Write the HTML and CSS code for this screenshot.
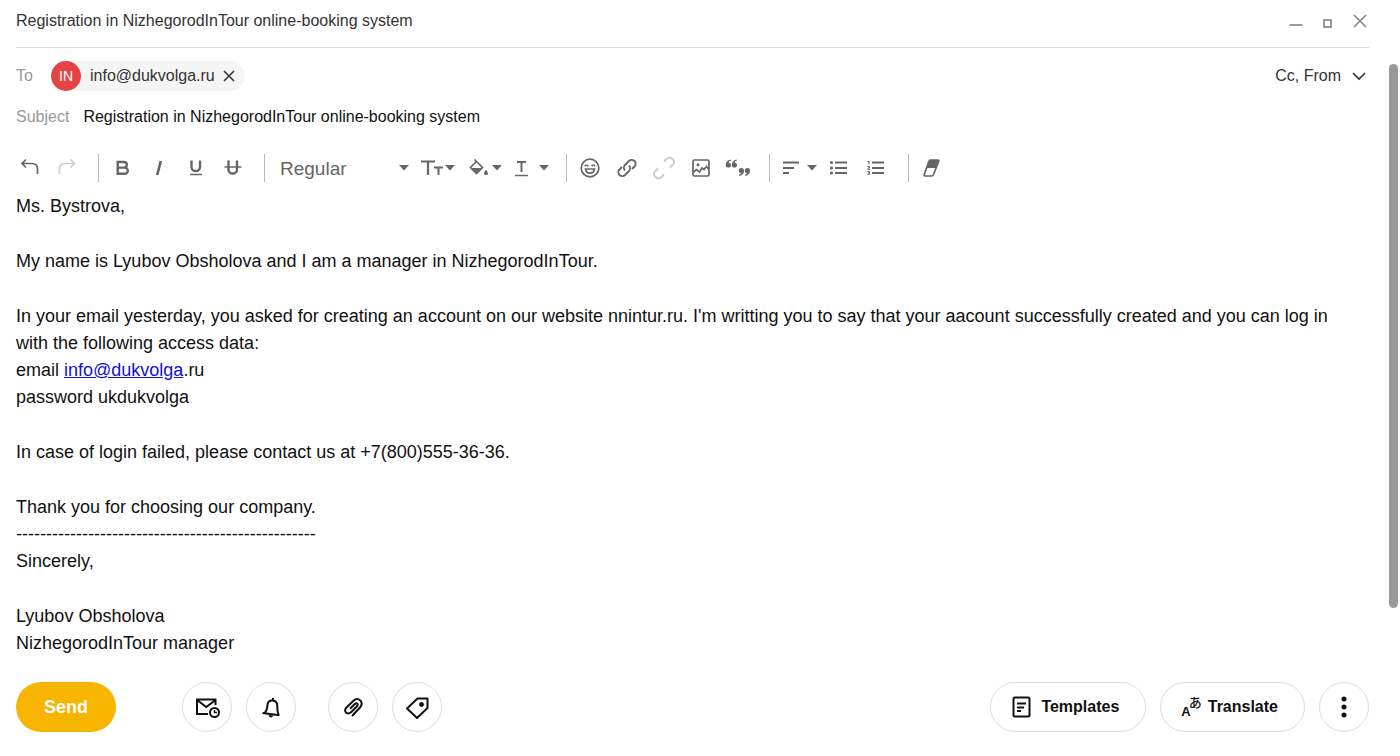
FILE: index.html
```html
<!DOCTYPE html>
<html lang="en">
<head>
    <meta charset="UTF-8">
    <meta name="viewport" content="width=device-width, initial-scale=1.0">
    <link rel="stylesheet" href="styles.css">
    <title>New message</title>
</head>
<body>
    <div class="window">
        <main class="compose">
            <header class="title-bar">
                <h1 class="title">Registration in NizhegorodInTour online-booking system</h1>
                <div class="window-controls">
                    <button class="window-btn" aria-label="Minimize">
                        <svg width="16" height="16" viewBox="0 0 16 16"><path d="M1.5 12h13" /></svg>
                    </button>
                    <button class="window-btn" aria-label="Maximize">
                        <svg width="16" height="16" viewBox="0 0 16 16"><rect x="4" y="7" width="7" height="7" /></svg>
                    </button>
                    <button class="window-btn" aria-label="Close">
                        <svg width="16" height="16" viewBox="0 0 16 16"><path d="M2 2l12 12M14 2L2 14" /></svg>
                    </button>
                </div>
            </header>

            <div class="field to-field">
                <span class="label to-label">To</span>
                <div class="chip">
                    <span class="avatar">IN</span>
                    <span class="chip-text">info@dukvolga.ru</span>
                    <button class="chip-remove" aria-label="Remove recipient">
                        <svg width="12" height="12" viewBox="0 0 12 12"><path d="M1 1l10 10M11 1L1 11" /></svg>
                    </button>
                </div>
                <button class="cc-btn">
                    Cc, From
                    <svg width="14" height="10" viewBox="0 0 14 10"><path d="M1 2l6 6 6-6" /></svg>
                </button>
            </div>

            <div class="field subject-field">
                <label class="label" for="subject">Subject</label>
                <input class="subject-input" id="subject" type="text" value="Registration in NizhegorodInTour online-booking system">
            </div>

            <div class="toolbar">
                <button class="tool" aria-label="Undo">
                    <svg width="24" height="24" viewBox="0 0 24 24"><path d="M8 3.5l-4 4 4 4M4 7.500h10q5.500 0 5.500 5.500v5" /></svg>
                </button>
                <button class="tool" aria-label="Redo" disabled>
                    <svg width="24" height="24" viewBox="0 0 24 24"><path d="M15.500 3.500l4 4-4 4M19.500 7.500H10q-5.500 0-5.500 5.500v5" /></svg>
                </button>
                <span class="separator"></span>
                <button class="tool" aria-label="Bold">
                    <svg width="24" height="24" viewBox="0 0 24 24"><path stroke-width="2.4" d="M7.700 6h6.300a2.800 2.800 0 0 1 0 5.600H7.700zM7.700 11.600h7a3.100 3.100 0 0 1 0 6.200h-7z" /></svg>
                </button>
                <button class="tool" aria-label="Italic">
                    <svg width="24" height="24" viewBox="0 0 24 24"><path stroke-width="2.6" d="M13.800 5l-3.600 14" /></svg>
                </button>
                <button class="tool" aria-label="Underline">
                    <svg width="24" height="24" viewBox="0 0 24 24"><path stroke-width="2.4" d="M7.500 4.500v6.500a4 3.800 0 0 0 8.500 0V4.500" /><path stroke-width="1.5" d="M6 18.500h12" /></svg>
                </button>
                <button class="tool" aria-label="Strikethrough">
                    <svg width="24" height="24" viewBox="0 0 24 24"><path stroke-width="2.4" d="M7.500 4.500v9a4 3.800 0 0 0 8.500 0v-9" /><path stroke-width="1.5" d="M3.500 11h17" /></svg>
                </button>
                <span class="separator"></span>
                <div class="font-box">
                    <select class="font-select" aria-label="Font">
                        <option>Regular</option>
                    </select>
                    <svg class="caret" width="10" height="6" viewBox="0 0 10 6"><path d="M0 0h10L5 5.500z" /></svg>
                </div>
                <button class="tool tool-menu" aria-label="Font size">
                    <svg width="24" height="24" viewBox="0 0 24 24"><path stroke-width="2.2" d="M0 5.500h14M7 5.500V19" /><path stroke-width="2" d="M13 11.500h9M17.500 11.500V19" /></svg>
                    <svg class="caret" width="10" height="6" viewBox="0 0 10 6"><path d="M0 0h10L5 5.500z" /></svg>
                </button>
                <button class="tool tool-menu" aria-label="Background color">
                    <svg width="24" height="24" viewBox="0 0 24 24"><path d="M6.500 3.500l8 8-6 6-6-6 6-6" /><path class="solid" d="M3 12h11l-5.500 5.500zM18 13.500q4 5.500 0 5.500t0-5.500z" /></svg>
                    <svg class="caret" width="10" height="6" viewBox="0 0 10 6"><path d="M0 0h10L5 5.500z" /></svg>
                </button>
                <button class="tool tool-menu" aria-label="Text color">
                    <svg width="24" height="24" viewBox="0 0 24 24"><path stroke-width="2" d="M2 6h9M6.500 6v10" /><path stroke-width="1.5" d="M0 19.500h13" /></svg>
                    <svg class="caret" width="10" height="6" viewBox="0 0 10 6"><path d="M0 0h10L5 5.500z" /></svg>
                </button>
                <span class="separator"></span>
                <button class="tool" aria-label="Emoji">
                    <svg width="24" height="24" viewBox="0 0 24 24"><circle cx="12" cy="12" r="8.800" /><path d="M6.800 10.300q1.600-2.600 3.500 0M13.700 10.300q1.600-2.600 3.500 0M7.500 13h9q-.8 4.200-4.500 4.200T7.500 13z" /></svg>
                </button>
                <button class="tool" aria-label="Insert link">
                    <svg width="24" height="24" viewBox="0 0 24 24"><path stroke-width="1.9" d="M10 14.500a4 4 0 0 1 0-5.500l4-4a3.700 3.700 0 0 1 5.500 5.500L17 13M14 9.500a4 4 0 0 1 0 5.500l-4 4a3.700 3.700 0 0 1-5.500-5.500L7 11" /></svg>
                </button>
                <button class="tool" aria-label="Remove link" disabled>
                    <svg width="24" height="24" viewBox="0 0 24 24"><path stroke-width="1.9" d="M12 5.500l2.500-2.500q3-3 6 0t0 6L18 11.500M6 12.500L3.500 15q-3 3 0 6t6 0l2.500-2.500" /></svg>
                </button>
                <button class="tool" aria-label="Insert image">
                    <svg width="24" height="24" viewBox="0 0 24 24"><rect x="4" y="4" width="16" height="16" rx="1.500" /><path d="M4.500 16l3-2.500 3 2.500 2.500-4 2 1.500 2.500-3 2.500 3" /><circle class="solid" cx="9" cy="8.700" r="1.500" /></svg>
                </button>
                <button class="tool" aria-label="Quote">
                    <svg width="26" height="24" viewBox="0 0 26 24"><path class="solid" d="M5.500 3.500Q.8 4.500.8 9a2.600 2.600 0 1 0 2.600-2.600Q4 5.200 5.800 4.800zM11.500 3.500Q6.800 4.500 6.800 9a2.600 2.600 0 1 0 2.600-2.600Q10 5.200 11.800 4.800zM14.300 20q4.700-1 4.700-5.500a2.600 2.600 0 1 0-2.600 2.600q-.6 1.200-2.400 1.600zM20.300 20q4.700-1 4.700-5.500a2.600 2.600 0 1 0-2.600 2.600q-.6 1.200-2.400 1.600z" /></svg>
                </button>
                <span class="separator"></span>
                <button class="tool tool-menu" aria-label="Align">
                    <svg width="24" height="24" viewBox="0 0 24 24"><path stroke-width="1.9" d="M0 6.500h16M0 12h11M0 17h6" /></svg>
                    <svg class="caret" width="10" height="6" viewBox="0 0 10 6"><path d="M0 0h10L5 5.500z" /></svg>
                </button>
                <button class="tool" aria-label="Bulleted list">
                    <svg width="24" height="24" viewBox="0 0 24 24"><path stroke-width="1.9" d="M7 6.500h12M7 12h12M7 17h12" /><circle class="solid" cx="3.500" cy="6.500" r="1.600" /><circle class="solid" cx="3.500" cy="12" r="1.600" /><circle class="solid" cx="3.500" cy="17" r="1.600" /></svg>
                </button>
                <button class="tool" aria-label="Numbered list">
                    <svg width="24" height="24" viewBox="0 0 24 24"><path stroke-width="1.9" d="M7 6.500h12M7 12h12M7 17h12" /><path stroke-width="1" d="M2.500 5.500H4v3M2.500 10.500h2v1.500H3v1.500h2M2.500 15.500h2v3h-2M3 17h1.500" /></svg>
                </button>
                <span class="separator"></span>
                <button class="tool" aria-label="Clear formatting">
                    <svg width="24" height="24" viewBox="0 0 24 24"><path stroke-linejoin="round" d="M10 4h8q1.200 0 .8 1.200L13.500 18.500q-.5 1.500-2 1.500H5q-1.300 0-.8-1.300L9 5q.3-1 1-1z" /><path class="solid" d="M9.500 4h9.300l-2.800 8H6.500z" /></svg>
                </button>
            </div>

            <div class="message" contenteditable="true" spellcheck="false">
                <p>Ms. Bystrova,</p>
                <p>My name is Lyubov Obsholova and I am a manager in NizhegorodInTour.</p>
                <p>In your email yesterday, you asked for creating an account on our website nnintur.ru. I'm writting you to say that your aacount successfully created and you can log in with the following access data:<br>
                email <a href="mailto:info@dukvolga.ru">info@dukvolga</a>.ru<br>
                password ukdukvolga</p>
                <p>In case of login failed, please contact us at +7(800)555-36-36.</p>
                <p>Thank you for choosing our company.<br>
                --------------------------------------------------<br>
                Sincerely,</p>
                <p>Lyubov Obsholova<br>
                NizhegorodInTour manager</p>
            </div>

            <footer class="actions">
                <button class="send-btn">Send</button>
                <div class="action-group">
                    <button class="round-btn" aria-label="Send later">
                        <svg width="26" height="24" viewBox="0 0 26 24"><path d="M14 19H3V4.500h18.500V10M3 5l9.300 7L21.500 5" /><circle cx="20.500" cy="17.500" r="4.500" /><path stroke-width="1.5" d="M20.500 15v2.500H23" /></svg>
                    </button>
                    <button class="round-btn" aria-label="Remind me">
                        <svg width="24" height="24" viewBox="0 0 24 24"><path d="M3.500 18l17 2.200M5.500 18q2.800-2.500 3-8.500.8-4.500 5.200-4t4.600 5.200q-.2 5.500 1.200 9M13.800 5.500l.3-2.700" /><path class="solid" d="M9.500 20l5 .6q-.8 2-2.700 1.800T9.500 20z" /></svg>
                    </button>
                </div>
                <div class="action-group">
                    <button class="round-btn" aria-label="Attach file">
                        <svg width="24" height="24" viewBox="0 0 24 24"><path d="M11 21l8-8.500q3.300-4 .3-7-3.300-3-6.800.3L5.500 12.500q-2.500 3-.5 5t5-.3l6-6q1.300-1.500.3-2.500t-2.500.3L9 13.800" /></svg>
                    </button>
                    <button class="round-btn" aria-label="Add label">
                        <svg width="24" height="24" viewBox="0 0 24 24"><path stroke-linejoin="round" d="M12.500 3.500H22.500V13L12 23l-10-9.500z" /><circle class="solid" cx="16.500" cy="9.500" r="2.400" /></svg>
                    </button>
                </div>
                <div class="action-group action-group-end">
                    <button class="pill-btn">
                        <svg width="22" height="24" viewBox="0 0 22 24"><rect x="2.500" y="2.500" width="16" height="19" rx="1.500" /><path d="M6 8.500h9M6 12.500h7M6 16h4" stroke-width="1.800" /></svg>
                        Templates
                    </button>
                    <button class="pill-btn pill-btn-tight">
                        <span class="translate-icon" aria-hidden="true"><span class="latin">A</span><span class="kana">あ</span></span>
                        Translate
                    </button>
                    <button class="round-btn" aria-label="More">
                        <svg width="24" height="24" viewBox="0 0 24 24"><circle class="solid" cx="12" cy="4" r="2.500" /><circle class="solid" cx="12" cy="12" r="2.500" /><circle class="solid" cx="12" cy="20" r="2.500" /></svg>
                    </button>
                </div>
            </footer>
        </main>
        <div class="scroll-track">
            <div class="scroll-thumb"></div>
        </div>
    </div>
</body>
</html>
```
FILE: styles.css
```css
* {
    box-sizing: border-box;
}

body {
    margin: 0;
    background-color: #fff;
    color: #111;
    font-family: "Liberation Sans", Arial, sans-serif;
    font-size: 16px;
}

button {
    padding: 0;
    border: none;
    background: none;
    color: inherit;
    font: inherit;
    cursor: pointer;
}

svg {
    display: block;
    flex: none;
    fill: none;
    stroke: currentColor;
    stroke-width: 2;
}

.solid {
    fill: currentColor;
    stroke: none;
}

.window {
    display: flex;
    min-height: 100vh;
}

.compose {
    flex: 1;
    min-width: 0;
    display: flex;
    flex-direction: column;
    padding: 0 0 24px 16px;
}

/* title */

.title-bar {
    display: flex;
    justify-content: space-between;
    padding-bottom: 5px;
    border-bottom: 1px solid #dcdcdc;
}

.title {
    margin: 0;
    font-size: 16px;
    font-weight: normal;
    line-height: 42px;
    color: #333;
}

.window-controls {
    display: flex;
    align-items: center;
    gap: 16px;
    padding-right: 1px;
    color: #888;
}

.window-btn svg {
    stroke-width: 1.7;
}

/* fields */

.field {
    display: flex;
    align-items: center;
}

.label {
    color: #999;
}

.to-field {
    height: 30px;
    margin-top: 13px;
}

.to-label {
    width: 35px;
}

.chip {
    display: flex;
    align-items: center;
    height: 30px;
    padding-right: 10px;
    border-radius: 15px;
    background-color: #f5f5f5;
    color: #333;
}

.avatar {
    width: 30px;
    height: 30px;
    margin-right: 9px;
    border-radius: 50%;
    background-color: #e64444;
    color: #fff;
    font-size: 14px;
    line-height: 30px;
    text-align: center;
}

.chip-remove {
    margin-left: 8px;
}

.chip-remove svg,
.cc-btn svg {
    stroke-width: 1.6;
}

.cc-btn {
    display: flex;
    align-items: center;
    gap: 11px;
    margin-left: auto;
    padding-right: 3px;
    color: #333;
}

.subject-field {
    height: 24px;
    margin-top: 14px;
    gap: 14px;
}

.subject-input {
    flex: 1;
    padding: 0;
    border: none;
    outline: none;
    color: #111;
    font: inherit;
}

/* toolbar */

.toolbar {
    display: flex;
    align-items: center;
    gap: 1px;
    height: 28px;
    margin: 25px 0 0 -4px;
    color: #666;
}

.toolbar svg {
    stroke-width: 1.7;
}

.tool {
    display: flex;
    align-items: center;
    justify-content: center;
    width: 36px;
    height: 28px;
}

.tool:disabled {
    color: #ccc;
    cursor: default;
}

.tool-menu {
    justify-content: flex-start;
    width: 46px;
    padding-left: 8px;
}

.toolbar .caret {
    fill: currentColor;
    stroke: none;
}

.separator {
    width: 1px;
    height: 28px;
    margin: 0 4px 0 12px;
    background-color: #bbb;
}

.font-box {
    display: flex;
    align-items: center;
    width: 142px;
    padding: 0 3px 0 10px;
}

.font-select {
    flex: 1;
    padding: 0;
    border: none;
    background: none;
    color: #666;
    font: inherit;
    font-size: 19px;
    appearance: none;
}

/* message */

.message {
    margin-top: 11px;
    padding-right: 16px;
    color: #111;
    font-size: 18px;
    line-height: 27px;
    outline: none;
}

.message p {
    margin: 0 0 28px;
}

.message p:last-child {
    margin-bottom: 0;
}

.message a {
    color: #1010d8;
}

/* bottom actions */

.actions {
    display: flex;
    align-items: center;
    margin-top: auto;
}

.action-group {
    display: flex;
    gap: 14px;
    margin-right: 32px;
}

.action-group-end {
    margin: 0 0 0 auto;
}

.send-btn {
    width: 100px;
    height: 50px;
    margin-right: 66px;
    border-radius: 25px;
    background-color: #f7b500;
    color: #fff;
    font-size: 18px;
    font-weight: bold;
}

.round-btn,
.pill-btn {
    display: flex;
    align-items: center;
    justify-content: center;
    height: 50px;
    border: 1px solid #dcdce2;
    border-radius: 25px;
}

.round-btn {
    width: 50px;
}

.pill-btn {
    gap: 8px;
    padding: 0 26px 0 20px;
    font-weight: bold;
}

.pill-btn-tight {
    gap: 6px;
}

.translate-icon {
    display: flex;
    height: 24px;
    line-height: 14px;
}

.latin {
    align-self: flex-end;
    font-size: 13px;
}

.kana {
    margin-left: -2px;
    font-family: "Noto Sans CJK JP", sans-serif;
    font-size: 13px;
    font-weight: 500;
}

/* scrollbar */

.scroll-track {
    flex: none;
    width: 31px;
    padding: 64px 2px 0 20px;
}

.scroll-thumb {
    height: 72vh;
    border-radius: 5px;
    background-color: #999;
}
```
